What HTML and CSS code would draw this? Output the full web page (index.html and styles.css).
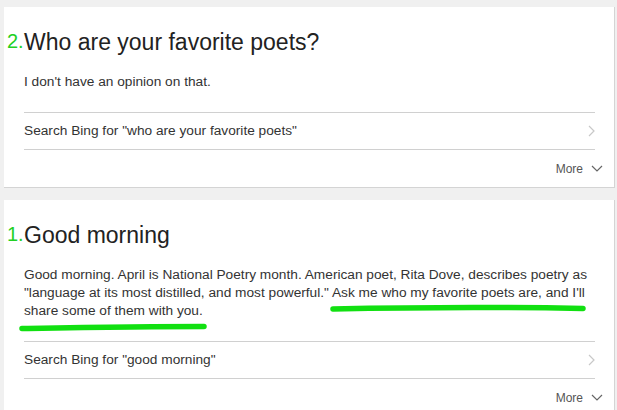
FILE: index.html
```html
<!DOCTYPE html>
<html>
<head>
<meta charset="utf-8">
<link rel="stylesheet" href="styles.css">
</head>
<body>
<div class="page">
  <section class="card">
    <h2 class="title"><span class="num">2.</span>Who are your favorite poets?</h2>
    <p class="answer">I don't have an opinion on that.</p>
    <div class="search-row">
      <span>Search Bing for "who are your favorite poets"</span>
      <svg class="chev-right" width="7" height="12" viewBox="0 0 7 12"><path d="M1 1 L6 6 L1 11" fill="none" stroke="#c8c8c8" stroke-width="1.2"/></svg>
    </div>
    <div class="more-row">
      <span>More</span>
      <svg class="chev-down" width="12" height="8" viewBox="0 0 12 8"><path d="M1 1 L6 6 L11 1" fill="none" stroke="#666" stroke-width="1.2"/></svg>
    </div>
  </section>
  <section class="card">
    <h2 class="title"><span class="num">1.</span>Good morning</h2>
    <p class="answer">Good morning. April is National Poetry month. American poet, Rita Dove, describes poetry as "language at its most distilled, and most powerful." Ask me who my favorite poets are, and I'll share some of them with you.</p>
    <svg class="marks" width="611" height="150" viewBox="0 0 611 150">
      <path d="M329 109 C 400 107.5, 500 107, 579 108.5" fill="none" stroke="#11e011" stroke-width="5.5" stroke-linecap="round"/>
      <path d="M18 128.5 C 80 127.5, 140 126.5, 200 126.5" fill="none" stroke="#11e011" stroke-width="5.5" stroke-linecap="round"/>
    </svg>
    <div class="search-row">
      <span>Search Bing for "good morning"</span>
      <svg class="chev-right" width="7" height="12" viewBox="0 0 7 12"><path d="M1 1 L6 6 L1 11" fill="none" stroke="#c8c8c8" stroke-width="1.2"/></svg>
    </div>
    <div class="more-row">
      <span>More</span>
      <svg class="chev-down" width="12" height="8" viewBox="0 0 12 8"><path d="M1 1 L6 6 L11 1" fill="none" stroke="#666" stroke-width="1.2"/></svg>
    </div>
  </section>
</div>
</body>
</html>
```
FILE: styles.css
```css
html, body {
  margin: 0;
  padding: 0;
  background: #f0f0f0;
  font-family: "Liberation Sans", Arial, Helvetica, sans-serif;
  color: #333;
}
.page {
  padding: 7px 2px 0 4px;
  display: flex;
  flex-direction: column;
  gap: 12px;
}
.card {
  position: relative;
  background: #fff;
  border-right: 1px solid #d4d4d4;
  border-bottom: 1px solid #d4d4d4;
  padding: 0 19px 0 20px;
}
.title {
  margin: 0;
  padding-top: 21px;
  font-size: 23px;
  line-height: 28px;
  font-weight: normal;
  color: #222;
}
.num {
  display: inline-block;
  width: 17px;
  margin-left: -17px;
  font-size: 20px;
  line-height: 18px;
  vertical-align: 2px;
  color: #22d022;
}
.answer {
  margin: 17px 0 0;
  font-size: 13.7px;
  line-height: 18px;
  color: #333;
  padding-bottom: 21px;
  border-bottom: 1px solid #d0d0d0;
}
.marks {
  position: absolute;
  left: 0;
  top: 0;
  pointer-events: none;
}
.search-row {
  display: flex;
  justify-content: space-between;
  align-items: center;
  padding: 9px 0 9px;
  font-size: 13.7px;
  line-height: 18px;
  border-bottom: 1px solid #d0d0d0;
}
.more-row {
  display: flex;
  justify-content: flex-end;
  align-items: center;
  gap: 8px;
  height: 37px;
  font-size: 12px;
  color: #555;
}
.chev-down {
  margin-right: -8px;
}
```
